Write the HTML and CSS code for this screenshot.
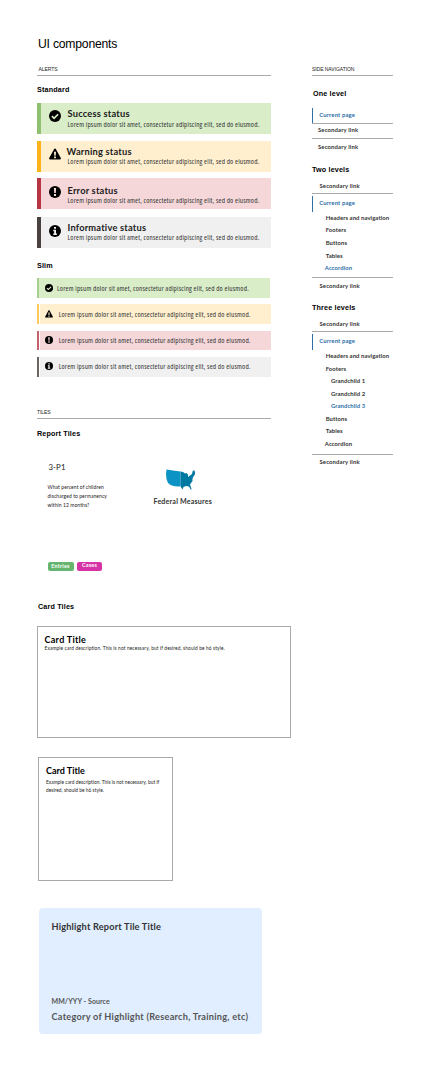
FILE: index.html
```html
<!DOCTYPE html>
<html lang="en">
<head>
<meta charset="utf-8">
<title>UI components</title>
<link rel="stylesheet" href="styles.css">
</head>
<body>
<svg class="defs" width="0" height="0" aria-hidden="true">
  <symbol id="check" viewBox="0 0 24 24"><circle cx="12" cy="12" r="12"/><path d="M5.800 12.200l4.400 4.300 8-8" fill="none" stroke="currentColor" stroke-width="3.400"/></symbol>
  <symbol id="warning" viewBox="0 0 24 24"><path d="M12 .8c.8 0 1.300.4 1.700 1L23.600 20c.8 1.500 0 2.800-1.500 2.800H1.900c-1.500 0-2.300-1.300-1.500-2.800L10.300 1.800c.4-.6.9-1 1.700-1z"/><path d="M10 7.500h4l-.6 8h-2.800zM10.200 17h3.600v3.400h-3.600z" fill="currentColor"/></symbol>
  <symbol id="error" viewBox="0 0 24 24"><circle cx="12" cy="12" r="12"/><path d="M9.800 4h4.400l-.6 10h-3.200zM10 16h4v4h-4z" fill="currentColor"/></symbol>
  <symbol id="info" viewBox="0 0 24 24"><circle cx="12" cy="12" r="12"/><path d="M10 4h4v3.600h-4zM8.500 9.500H14V17h1.800v3H8.500v-3h1.800v-4.500H8.500z" fill="currentColor"/></symbol>
</svg>
<div class="page">
  <main class="main">
    <h1 class="title">UI components</h1>

    <h2 class="label label-alerts">ALERTS</h2>
    <h3 class="heading">Standard</h3>
    <div class="alerts">
      <div class="alert success"><svg class="icon"><use href="#check"/></svg><div><h4>Success status</h4><p>Lorem ipsum dolor sit amet, consectetur adipiscing elit, sed do eiusmod.</p></div></div>
      <div class="alert warning"><svg class="icon"><use href="#warning"/></svg><div><h4>Warning status</h4><p>Lorem ipsum dolor sit amet, consectetur adipiscing elit, sed do eiusmod.</p></div></div>
      <div class="alert error"><svg class="icon"><use href="#error"/></svg><div><h4>Error status</h4><p>Lorem ipsum dolor sit amet, consectetur adipiscing elit, sed do eiusmod.</p></div></div>
      <div class="alert info"><svg class="icon"><use href="#info"/></svg><div><h4>Informative status</h4><p>Lorem ipsum dolor sit amet, consectetur adipiscing elit, sed do eiusmod.</p></div></div>
    </div>

    <h3 class="heading heading-slim">Slim</h3>
    <div class="slims">
      <div class="slim success"><svg class="icon"><use href="#check"/></svg><p>Lorem ipsum dolor sit amet, consectetur adipiscing elit, sed do eiusmod.</p></div>
      <div class="slim warning"><svg class="icon"><use href="#warning"/></svg><p>Lorem ipsum dolor sit amet, consectetur adipiscing elit, sed do eiusmod.</p></div>
      <div class="slim error"><svg class="icon"><use href="#error"/></svg><p>Lorem ipsum dolor sit amet, consectetur adipiscing elit, sed do eiusmod.</p></div>
      <div class="slim info"><svg class="icon"><use href="#info"/></svg><p>Lorem ipsum dolor sit amet, consectetur adipiscing elit, sed do eiusmod.</p></div>
    </div>

    <h2 class="label label-tiles">TILES</h2>
    <h3 class="heading heading-reports">Report Tiles</h3>
    <div class="tiles">
      <article class="measure">
        <h4>3-P1</h4>
        <p>What percent of children<br>discharged to permanency<br>within 12 months?</p>
        <div class="tags"><span class="tag entries">Entries</span><span class="tag cases">Cases</span></div>
      </article>
      <article class="federal">
        <svg class="map" viewBox="0 0 60 42"><path fill="#0a93c4" d="M3 1l13 2 15 2v29l-3 1-3 0-8-1-6-2-5-4-3-8-1-10z"/><path fill="#0079a3" d="M31 5l5 1 4 3 3-1 3 3 0 5 4-3 4-3 1-5 3-3 2 4 1 3-4 6-2 4 0 5-5 7 3 9-1 2-4-7-6-1-5 2-2 5-4-6z"/></svg>
        <h4>Federal Measures</h4>
      </article>
    </div>

    <h3 class="heading heading-cards">Card Tiles</h3>
    <article class="card card-wide">
      <h4>Card Title</h4>
      <p>Example card description. This is not necessary, but if desired, should be h6 style.</p>
    </article>
    <article class="card card-small">
      <h4>Card Title</h4>
      <p>Example card description. This is not necessary, but if<br>desired, should be h6 style.</p>
    </article>
    <article class="highlight">
      <h4>Highlight Report Tile Title</h4>
      <p class="source">MM/YYY - Source</p>
      <p class="category">Category of Highlight (Research, Training, etc)</p>
    </article>
  </main>

  <aside class="side">
    <h2 class="label">SIDE NAVIGATION</h2>
    <h3 class="heading one">One level</h3>
    <nav class="nav nav-one">
      <a class="current">Current page</a>
      <a class="ruled">Secondary link</a>
      <a class="last">Secondary link</a>
    </nav>
    <h3 class="heading two">Two levels</h3>
    <nav class="nav">
      <a class="first">Secondary link</a>
      <a class="current">Current page</a>
      <ul>
        <li>Headers and navigation</li>
        <li>Footers</li>
        <li>Buttons</li>
        <li>Tables</li>
        <li class="active outdent">Accordion</li>
      </ul>
      <a class="end">Secondary link</a>
    </nav>
    <h3 class="heading three">Three levels</h3>
    <nav class="nav">
      <a class="first">Secondary link</a>
      <a class="current">Current page</a>
      <ul>
        <li>Headers and navigation</li>
        <li>Footers
          <ul>
            <li>Grandchild 1</li>
            <li>Grandchild 2</li>
            <li class="active">Grandchild 3</li>
          </ul>
        </li>
        <li>Buttons</li>
        <li>Tables</li>
        <li class="outdent">Accordion</li>
      </ul>
      <a class="end">Secondary link</a>
    </nav>
  </aside>
</div>
</body>
</html>
```
FILE: styles.css
```css
* { box-sizing: border-box; }
body { margin: 0; background: #fff; color: #000; font-family: Lato, sans-serif; }
h1, h2, h3, h4, p, ul { margin: 0; padding: 0; }
h1, h2, h4, p { font-weight: normal; }
ul { list-style: none; }
.defs { position: absolute; }
.page { display: flex; gap: 41px; width: 430px; height: 1076px; padding: 36px 37px 0; overflow: hidden; }
.main { flex: none; width: 234px; }
.side { flex: none; width: 81px; padding-top: 29px; }

.title { padding-left: 1px; font: 12.2px/16px "Liberation Sans", sans-serif; letter-spacing: -0.22px; }
.label { height: 11px; border-bottom: 1px solid #aaa; color: #222; font: 5px/8px "Liberation Sans", sans-serif; letter-spacing: -0.05px; white-space: nowrap; }
.label-alerts { margin-top: 13px; padding-left: 1.500px; }
.label-tiles { margin-top: 31.400px; }
.heading { margin-top: 9px; font: bold 7.200px/10px "Liberation Sans", sans-serif; letter-spacing: 0.16px; white-space: nowrap; }
.heading-slim { margin-top: 13px; }
.heading-reports { margin-top: 10px; }
.heading-cards { margin-top: 31px; padding-left: 1px; }

.icon { flex: none; display: block; fill: #000; }
.success { background: #d8edc8; color: #d8edc8; --bar: #8fc06f; --slim-bar: #a5cf8b; }
.warning { background: #ffefcf; color: #ffefcf; --bar: #ffb31a; --slim-bar: #ffc95c; }
.error { background: #f5d7d9; color: #f5d7d9; --bar: #b93443; --slim-bar: #c4616c; }
.info { background: #f0f0f0; color: #f0f0f0; --bar: #49413d; --slim-bar: #6b6562; }

.alerts { margin-top: 8px; }
.alert { display: flex; height: 31px; padding: 5px 0 0 7.500px; border-left: 4px solid var(--bar); }
.alert .icon { width: 12px; height: 12px; margin: 2px 7px 0 0; }
.alert h4 { color: #1b1b1b; font-weight: bold; font-size: 9.300px; line-height: 11px; letter-spacing: 0.2px; }
.alert p, .slim p { color: #333; font: 7.200px/8px "Open Sans", sans-serif; font-stretch: 75%; letter-spacing: 0.185px; white-space: nowrap; }
.alert p { margin-top: 0.500px; }
.alert.warning { margin-top: 7px; }
.alert.warning h4 { margin-left: -1px; }
.alert.warning p, .alert.error p, .alert.info p { margin-top: -0.500px; }
.alert.error { margin-top: 6px; padding-top: 7px; }
.alert.error .icon { margin-top: 1px; }
.alert.info { margin-top: 8px; }
.alert.info .icon { margin-top: 3px; }

.slims { display: grid; gap: 6.400px; margin-top: 7.200px; }
.slim { display: flex; align-items: center; height: 19.800px; padding-left: 5.500px; border-left: 2px solid var(--slim-bar); box-shadow: inset 1px 0 #fff; }
.slim.success { width: 233px; box-shadow: none; }
.slim .icon { width: 8px; height: 8px; margin-right: 6.200px; }
.slim.success .icon { margin-right: 4.500px; }
.slim.error .icon, .slim.info .icon { margin-bottom: 1.500px; }
.slim p { padding-bottom: 1px; }

.tiles { display: flex; height: 132px; }
.measure { width: 116.500px; padding: 23px 0 0 10.500px; }
.measure h4 { padding-left: 1px; font-size: 7.800px; line-height: 10px; letter-spacing: 0.1px; color: #222; }
.measure p { margin-top: 11px; font-size: 5px; line-height: 9px; letter-spacing: 0.07px; color: #222; }
.tags { display: flex; gap: 3.500px; margin-top: 52px; }
.tag { height: 9px; border-radius: 2px; color: #fff; font-weight: bold; font-size: 5.400px; line-height: 9px; letter-spacing: 0.25px; text-align: center; }
.entries { width: 26px; background: #65b56e; }
.cases { width: 25px; background: #d633a6; line-height: 7px; }
.federal { padding-top: 30.500px; text-align: center; }
.map { display: block; width: 30px; height: 21px; margin-left: 11px; }
.federal h4 { margin-top: 7px; font-weight: bold; font-size: 7.100px; line-height: 10px; letter-spacing: 0.19px; color: #333; }

.card { border: 1px solid #aaa; }
.card h4 { font-weight: bold; font-size: 9px; line-height: 10px; }
.card p { font-size: 4.800px; color: #222; white-space: nowrap; }
.card-wide { width: 253.500px; height: 112px; margin-top: 14px; padding: 8px 6.500px; }
.card-wide h4 { letter-spacing: 0.29px; }
.card-wide p { line-height: 6px; letter-spacing: 0.126px; }
.card-small { width: 135px; height: 124px; margin: 19px 0 0 1px; padding: 8px 7px; }
.card-small p { margin-top: 2px; line-height: 8px; letter-spacing: 0.03px; }

.highlight { display: flex; flex-direction: column; width: 223.500px; height: 126px; margin: 27px 0 0 1.500px; padding: 13px 13px 11px; border-radius: 4px; background: #e0eeff; color: #333; white-space: nowrap; }
.highlight h4, .highlight p { font-weight: bold; letter-spacing: 0.18px; }
.highlight h4 { font-size: 9.200px; line-height: 12px; }
.highlight .source { margin-top: auto; font-size: 7px; line-height: 10px; letter-spacing: 0.07px; color: #555; }
.highlight .category { margin-top: 5px; font-size: 9.200px; line-height: 12px; letter-spacing: 0.25px; color: #555; }

.one { margin: 12.500px 0 0 1px; }
.two { margin-top: 13.500px; }
.three { margin-top: 13px; }
.nav { color: #333; font-weight: bold; font-size: 5.900px; line-height: 8px; letter-spacing: 0.14px; white-space: nowrap; }
.nav a { display: block; padding-left: 7.500px; }
.nav .current { height: 16px; margin-top: 1.500px; padding: 3px 0 0 6.300px; border-left: 1px solid #2e6fa8; color: #2e6fa8; }
.nav-one .current { height: 15px; margin-top: 9.500px; }
.nav .ruled { height: 16px; padding: 2px 0 0 6px; border: solid #aaa; border-width: 1px 0; }
.nav .last { margin-top: 4px; padding-left: 6px; }
.nav .first { padding-top: 7px; padding-bottom: 3.500px; border-bottom: 1px solid #aaa; }
.nav .end { margin-top: 3px; padding-top: 3.500px; border-top: 1px solid #aaa; }
.nav ul { line-height: 12.800px; letter-spacing: 0.08px; }
.nav li { padding-left: 13.700px; }
.nav li li { padding-left: 5.300px; }
.nav .active { margin-top: -1.200px; color: #2e6fa8; }
.nav .outdent { padding-left: 12.800px; }
```
